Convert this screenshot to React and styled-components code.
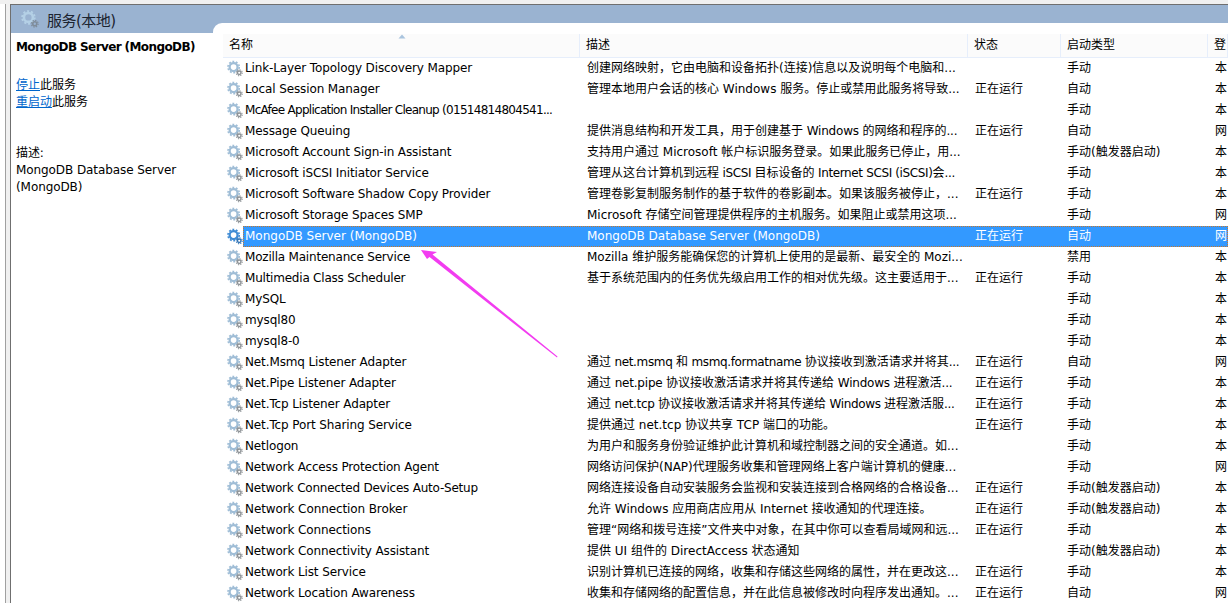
import React from "react";
import styled, { createGlobalStyle } from "styled-components";

const Global = createGlobalStyle`
  html, body {
    margin: 0;
    padding: 0;
    background: #fff;
  }
`;

const Screen = styled.div`
  position: relative;
  width: 1228px;
  height: 603px;
  overflow: hidden;
  display: flex;
  background: #f0f0f0;
  font-family: "DejaVu Sans", "Noto Sans CJK SC", sans-serif;
  font-size: 12px;
  color: #000;
`;

const Gutter = styled.div`
  width: 5px;
  margin-top: 4px;
  background: #fff;
  border-right: 1px solid #a0a0a0;
`;

const Frame = styled.div`
  flex: 1;
  min-width: 0;
  margin: 4px 0 0 4px;
  border-top: 1px solid #6f6f6f;
  border-left: 1px solid #6f6f6f;
  display: flex;
  flex-direction: column;
`;

const TitleBar = styled.div`
  height: 28px;
  flex: none;
  display: flex;
  align-items: center;
  gap: 8px;
  padding: 0 0 0 10px;
  background: #9ab3d1;
  font-size: 15px;
  letter-spacing: -0.5px;
  color: #1c2430;
`;

const Body = styled.div`
  flex: 1;
  min-height: 0;
  margin-top: -10px;
  display: flex;
`;

const Side = styled.aside`
  width: 197px;
  margin-top: 10px;
  padding: 5px 0 0 5px;
  flex: none;
  background: #fff;
  line-height: 17px;
`;

const ServiceName = styled.h2`
  margin: 0 0 21px;
  font-size: 12px;
  font-weight: bold;
  white-space: nowrap;
  letter-spacing: -0.6px;
  line-height: 18px;
`;

const ActionLine = styled.div`
  white-space: nowrap;
`;

const ActionLink = styled.a`
  color: #0066cc;
  text-decoration: underline;
`;

const Description = styled.p`
  margin: 34px 0 0;
  width: 180px;
  letter-spacing: -0.08px;
`;

const Panel = styled.section`
  flex: 1;
  min-width: 0;
  padding: 11px 0 0 10px;
  background: #fff;
  border-top-left-radius: 9px;
`;

const HeadRow = styled.div`
  position: relative;
  height: 24px;
  display: grid;
  grid-template-columns: 357px 388px 93px 147px 1fr;
  background: #fbfbfb;
  border-bottom: 1px solid #e6eefb;
  box-sizing: border-box;
`;

const HeadCell = styled.div`
  padding: 0 0 0 6px;
  line-height: 23px;
  white-space: nowrap;
  border-right: 1px solid #e6eefb;
  &:last-child {
    border-right: 0;
  }
`;

const SortArrow = styled.svg`
  position: absolute;
  left: 175px;
  top: 0;
`;

const Row = styled.div`
  height: 21px;
  display: flex;
  line-height: 21px;
`;

const GearSlot = styled.div`
  width: 20px;
  flex: none;
  display: flex;
  align-items: center;
  padding-left: 4px;
  box-sizing: border-box;
`;

const Cells = styled.div`
  flex: 1;
  min-width: 0;
  display: grid;
  grid-template-columns: 337px 388px 93px 147px 1fr;
  background: ${(p) => (p.$selected ? "#3399ff" : "transparent")};
  color: ${(p) => (p.$selected ? "#fff" : "#000")};
  outline: ${(p) => (p.$selected ? "1px dotted #c8772a" : "none")};
  outline-offset: -1px;
`;

const Cell = styled.div`
  padding-left: ${(p) => p.$pad || 7}px;
  white-space: nowrap;
  overflow: hidden;
`;

const NameText = styled.span`
  letter-spacing: ${(p) => p.$tracking ?? -0.12}px;
`;

// only the latin runs get tightened, the CJK glyphs stay on their 12px grid
const Latin = styled.span`
  letter-spacing: ${(p) => p.$tracking}px;
`;

const ArrowLayer = styled.svg`
  position: absolute;
  left: 0;
  top: 0;
  pointer-events: none;
`;

const Gear = ({ size = 17, ring = "#9fbdd6", small = "#8d9296", core = "#fff" }) => (
  <svg width={size} height={size} viewBox="0 0 17 17">
    <circle cx="7" cy="7" r="4.2" fill={core} stroke={ring} strokeWidth="2.4" />
    <circle cx="7" cy="7" r="6" fill="none" stroke={ring} strokeWidth="1.7" strokeDasharray="2 1.75" />
    <circle cx="13" cy="13" r="1.9" fill={core} stroke={small} strokeWidth="1.5" />
    <circle cx="13" cy="13" r="3.2" fill="none" stroke={small} strokeWidth="1.1" strokeDasharray="1.3 1.2" />
  </svg>
);

const Tracked = ({ text, tracking }) => {
  if (!tracking) return text;
  return text.split(/([\x20-\x7e]+)/).map((part, i) =>
    i % 2 ? (
      <Latin key={i} $tracking={tracking}>
        {part}
      </Latin>
    ) : (
      part
    )
  );
};

// name, description, status, startup, logon as, description tracking
const services = [
  ["Link-Layer Topology Discovery Mapper", "创建网络映射，它由电脑和设备拓扑(连接)信息以及说明每个电脑和...", "", "手动", "本"],
  ["Local Session Manager", "管理本地用户会话的核心 Windows 服务。停止或禁用此服务将导致...", "正在运行", "自动", "本"],
  ["McAfee Application Installer Cleanup (01514814804541...", "", "", "手动", "本"],
  ["Message Queuing", "提供消息结构和开发工具，用于创建基于 Windows 的网络和程序的...", "正在运行", "自动", "网", -0.2],
  ["Microsoft Account Sign-in Assistant", "支持用户通过 Microsoft 帐户标识服务登录。如果此服务已停止，用...", "", "手动(触发器启动)", "本"],
  ["Microsoft iSCSI Initiator Service", "管理从这台计算机到远程 iSCSI 目标设备的 Internet SCSI (iSCSI)会...", "", "手动", "本", -0.37],
  ["Microsoft Software Shadow Copy Provider", "管理卷影复制服务制作的基于软件的卷影副本。如果该服务被停止，...", "正在运行", "手动", "本"],
  ["Microsoft Storage Spaces SMP", "Microsoft 存储空间管理提供程序的主机服务。如果阻止或禁用这项...", "", "手动", "网"],
  ["MongoDB Server (MongoDB)", "MongoDB Database Server (MongoDB)", "正在运行", "自动", "网"],
  ["Mozilla Maintenance Service", "Mozilla 维护服务能确保您的计算机上使用的是最新、最安全的 Mozi...", "", "禁用", "本"],
  ["Multimedia Class Scheduler", "基于系统范围内的任务优先级启用工作的相对优先级。这主要适用于...", "正在运行", "手动", "本"],
  ["MySQL", "", "", "手动", "本"],
  ["mysql80", "", "", "手动", "本"],
  ["mysql8-0", "", "", "手动", "本"],
  ["Net.Msmq Listener Adapter", "通过 net.msmq 和 msmq.formatname 协议接收到激活请求并将其...", "正在运行", "自动", "网", -0.35],
  ["Net.Pipe Listener Adapter", "通过 net.pipe 协议接收激活请求并将其传递给 Windows 进程激活...", "正在运行", "手动", "本", -0.2],
  ["Net.Tcp Listener Adapter", "通过 net.tcp 协议接收激活请求并将其传递给 Windows 进程激活服...", "正在运行", "手动", "本", -0.35],
  ["Net.Tcp Port Sharing Service", "提供通过 net.tcp 协议共享 TCP 端口的功能。", "正在运行", "手动", "本"],
  ["Netlogon", "为用户和服务身份验证维护此计算机和域控制器之间的安全通道。如...", "", "手动", "本"],
  ["Network Access Protection Agent", "网络访问保护(NAP)代理服务收集和管理网络上客户端计算机的健康...", "", "手动", "网"],
  ["Network Connected Devices Auto-Setup", "网络连接设备自动安装服务会监视和安装连接到合格网络的合格设备...", "正在运行", "手动(触发器启动)", "本"],
  ["Network Connection Broker", "允许 Windows 应用商店应用从 Internet 接收通知的代理连接。", "正在运行", "手动(触发器启动)", "本"],
  ["Network Connections", "管理“网络和拨号连接”文件夹中对象，在其中你可以查看局域网和远...", "正在运行", "手动", "本"],
  ["Network Connectivity Assistant", "提供 UI 组件的 DirectAccess 状态通知", "", "手动(触发器启动)", "本"],
  ["Network List Service", "识别计算机已连接的网络，收集和存储这些网络的属性，并在更改这...", "正在运行", "手动", "本"],
  ["Network Location Awareness", "收集和存储网络的配置信息，并在此信息被修改时向程序发出通知。...", "正在运行", "自动", "网"],
];

const nameTracking = {
  "McAfee Application Installer Cleanup (01514814804541...": -0.72,
  "Network Connected Devices Auto-Setup": -0.22,
  "Mozilla Maintenance Service": -0.2,
  "Multimedia Class Scheduler": -0.22,
  "Network Access Protection Agent": -0.16,
  "Network Connection Broker": -0.1,
  "MongoDB Server (MongoDB)": 0,
};

const App = () => (
  <Screen>
    <Global />
    <Gutter />
    <Frame>
      <TitleBar>
        <Gear size={18} ring="#b4d0e6" small="#7f8c99" core="#9ab3d1" />
        <span>服务(本地)</span>
      </TitleBar>
      <Body>
        <Side>
          <ServiceName>MongoDB Server (MongoDB)</ServiceName>
          <ActionLine>
            <ActionLink>停止</ActionLink>此服务
          </ActionLine>
          <ActionLine>
            <ActionLink>重启动</ActionLink>此服务
          </ActionLine>
          <Description>
            描述:
            <br />
            MongoDB Database Server (MongoDB)
          </Description>
        </Side>
        <Panel>
          <HeadRow>
            <HeadCell>名称</HeadCell>
            <HeadCell>描述</HeadCell>
            <HeadCell>状态</HeadCell>
            <HeadCell>启动类型</HeadCell>
            <HeadCell>登</HeadCell>
            <SortArrow width="8" height="5" viewBox="0 0 8 5">
              <path d="M0.5 4.5 L4 0.5 L7.5 4.5 Z" fill="#a9c4de" />
            </SortArrow>
          </HeadRow>
          {services.map(([name, desc, status, startup, logon, tracking]) => {
            const selected = name === "MongoDB Server (MongoDB)";
            return (
              <Row key={name}>
                <GearSlot>
                  {selected ? <Gear ring="#3f8bd4" small="#3474b4" /> : <Gear />}
                </GearSlot>
                <Cells $selected={selected}>
                  <Cell $pad={2}>
                    <NameText $tracking={nameTracking[name]}>{name}</NameText>
                  </Cell>
                  <Cell>
                    <Tracked text={desc} tracking={tracking} />
                  </Cell>
                  <Cell>{status}</Cell>
                  <Cell $pad={6}>{startup}</Cell>
                  <Cell>{logon}</Cell>
                </Cells>
              </Row>
            );
          })}
        </Panel>
      </Body>
    </Frame>
    <ArrowLayer width="1228" height="603" viewBox="0 0 1228 603">
      <path d="M421 250 L437 252 L432.5 254.5 L557.5 356.5 L557 357.5 L429.5 257 L427 259 Z" fill="#f23cf0" />
    </ArrowLayer>
  </Screen>
);

export default App;
